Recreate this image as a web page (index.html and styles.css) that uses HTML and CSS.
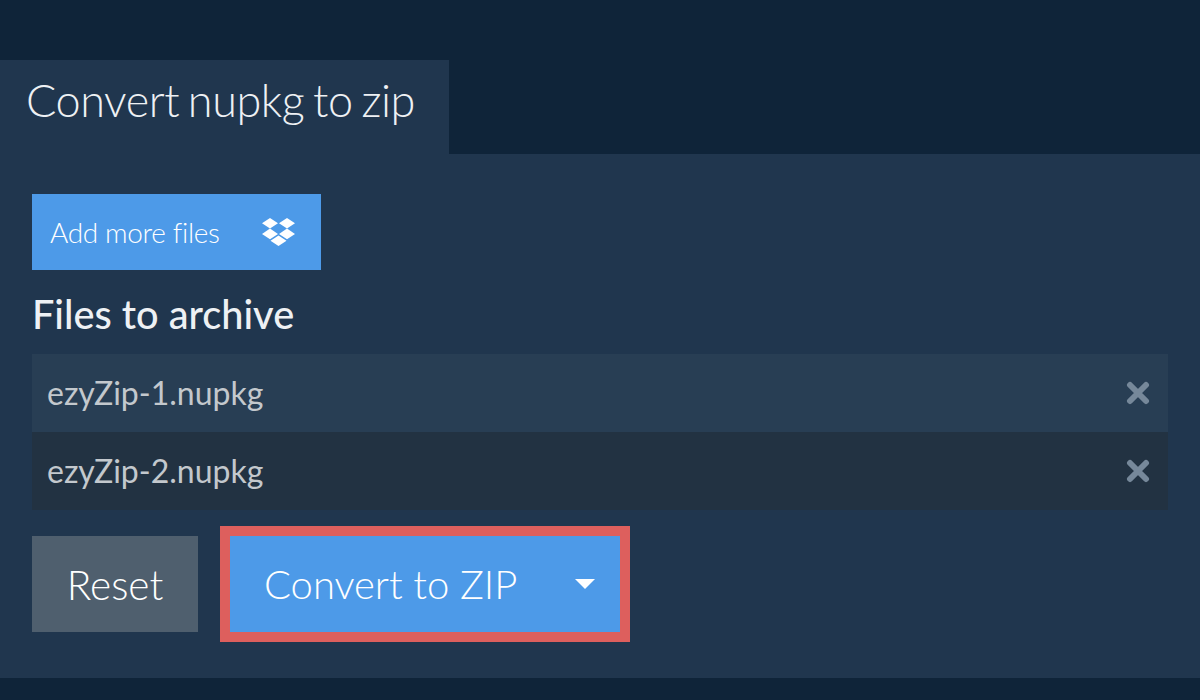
FILE: index.html
```html
<!DOCTYPE html>
<html lang="en">
<head>
    <meta charset="UTF-8">
    <title>Convert nupkg to zip</title>
    <link rel="stylesheet" href="styles.css">
</head>
<body>
    <div class="tabs">
        <h1 class="tab">Convert nupkg to zip</h1>
    </div>
    <div class="panel">
        <button class="add-btn">
            <span>Add more files</span>
            <svg class="dropbox" viewBox="0 0 33 28" width="33" height="28">
                <path d="M8 0L16 5.300 8 10.600 0 5.300Z M25 0L33 5.300 25 10.600 17 5.300Z M8 10.600L16 15.900 8 21.200 0 15.900Z M25 10.600L33 15.900 25 21.200 17 15.900Z M16.500 17.400L24.500 22.700 16.500 28 8.500 22.700Z" fill="#fff"/>
            </svg>
        </button>
        <h2 class="files-title">Files to archive</h2>
        <div class="file-list">
            <div class="file-row">
                <span class="file-name">ezyZip-1.nupkg</span>
                <svg class="remove" viewBox="0 0 24 24" width="24" height="24">
                    <path d="M4 4L20 20M20 4L4 20" stroke="#76889a" stroke-width="6" stroke-linecap="round"/>
                </svg>
            </div>
            <div class="file-row dark">
                <span class="file-name">ezyZip-2.nupkg</span>
                <svg class="remove" viewBox="0 0 24 24" width="24" height="24">
                    <path d="M4 4L20 20M20 4L4 20" stroke="#76889a" stroke-width="6" stroke-linecap="round"/>
                </svg>
            </div>
        </div>
        <div class="actions">
            <button class="reset-btn">Reset</button>
            <button class="convert-btn">
                <span>Convert to ZIP</span>
                <i class="caret"></i>
            </button>
        </div>
    </div>
</body>
</html>
```

FILE: styles.css
```css
* {
    margin: 0;
    padding: 0;
    box-sizing: border-box;
}

body {
    background-color: #0f2439;
    font-family: Lato, "Liberation Sans", sans-serif;
    height: 700px;
    overflow: hidden;
}

.tabs {
    padding-top: 60px;
    display: flex;
}

.tab {
    width: 449px;
    height: 94px;
    padding: 11px 0 0 26px;
    background-color: #20364e;
    color: #eef1f4;
    font-size: 45px;
    font-weight: 300;
    letter-spacing: -0.45px;
    word-spacing: -3px;
    line-height: 58px;
}

.panel {
    height: 524px;
    padding: 40px 32px 0;
    background-color: #20364e;
}

button {
    border: none;
    color: #fff;
    font-family: inherit;
    font-weight: 300;
    display: flex;
    align-items: center;
}

.add-btn {
    width: 289px;
    height: 76px;
    padding: 0 26px 0 18px;
    justify-content: space-between;
    background-color: #4d9ae8;
    font-size: 28px;
    letter-spacing: -0.35px;
}

.files-title {
    margin-top: 20px;
    height: 64px;
    color: #eef1f4;
    font-size: 39.700px;
    font-weight: 500;
    line-height: 48px;
}

.file-row {
    height: 78px;
    padding: 0 18px 0 15px;
    display: flex;
    align-items: center;
    justify-content: space-between;
    background-color: #283e54;
    color: #c3c8cd;
    font-size: 32px;
}

.file-row.dark {
    background-color: #223242;
}

.file-name {
    margin-bottom: 2px;
}

.actions {
    margin-top: 26px;
    display: flex;
    gap: 32px;
}

.reset-btn {
    width: 166px;
    height: 96px;
    justify-content: center;
    background-color: #4f5f6e;
    font-size: 40.500px;
}

.convert-btn {
    width: 390px;
    height: 96px;
    padding: 0 25px 0 34px;
    justify-content: space-between;
    background-color: #4d9ae8;
    outline: 10px solid #dd5f5d;
    font-size: 40px;
    letter-spacing: -0.05px;
}

.caret {
    width: 0;
    height: 0;
    border-left: 10px solid transparent;
    border-right: 10px solid transparent;
    border-top: 10px solid #fff;
}
```
